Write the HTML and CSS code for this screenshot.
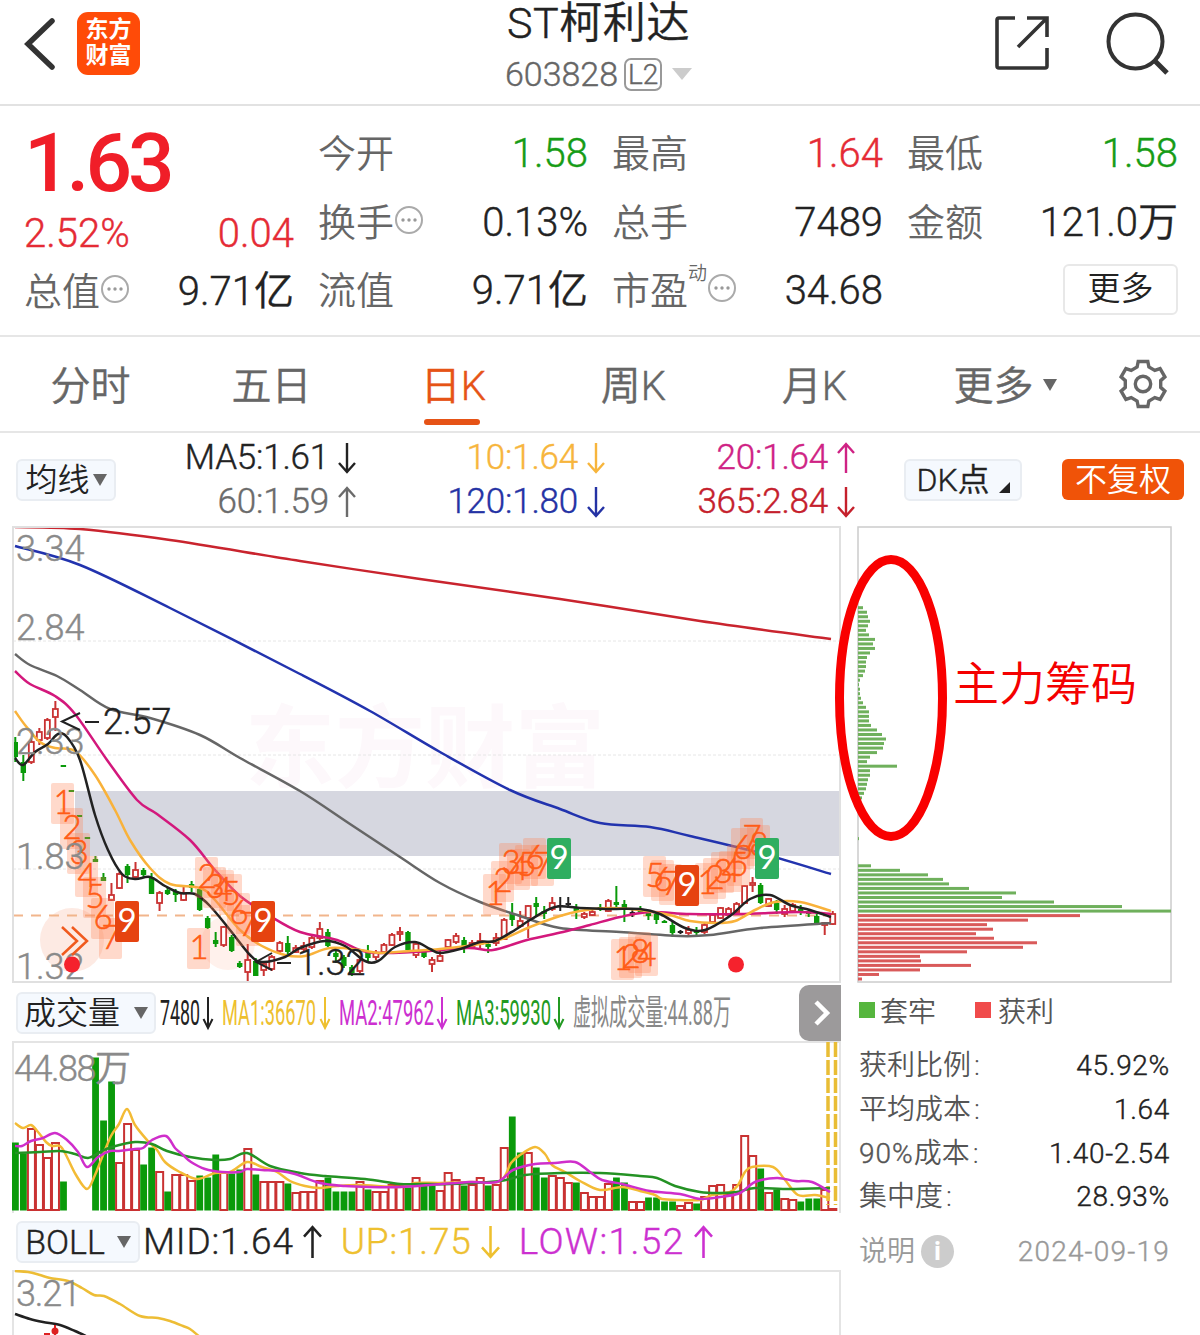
FILE: index.html
```html
<!DOCTYPE html>
<html lang="zh-CN">
<head>
    <meta charset="utf-8">
    <title>ST柯利达 603828</title>
    <link rel="stylesheet" href="styles.css">
</head>
<body>
    <svg class="defs" width="0" height="0">
        <symbol id="down" viewBox="0 0 18 32"><path d="M9 1V30M1 21L9 30L17 21" fill="none" stroke="currentColor" stroke-width="2.4"/></symbol>
        <symbol id="up" viewBox="0 0 18 32"><path d="M9 31V2M1 11L9 2L17 11" fill="none" stroke="currentColor" stroke-width="2.4"/></symbol>
        <symbol id="dots" viewBox="0 0 30 30"><circle cx="15" cy="15" r="13" fill="none" stroke="#aaa" stroke-width="2"/><g fill="#999"><circle cx="9" cy="15" r="1.7"/><circle cx="15" cy="15" r="1.7"/><circle cx="21" cy="15" r="1.7"/></g></symbol>
    </svg>

    <header>
        <div class="header-left">
            <svg class="back" width="32" height="52" viewBox="0 0 32 52"><path d="M28 3L4 26L28 49" fill="none" stroke="#333" stroke-width="5.5" stroke-linecap="round"/></svg>
            <div class="logo">东方<br>财富</div>
        </div>
        <div class="header-title">
            <h1>ST柯利达</h1>
            <div class="code">603828<span class="level">L2</span><i class="tri code-tri"></i></div>
        </div>
        <div class="header-right">
            <svg width="56" height="56" viewBox="0 0 56 56"><path d="M21 3H5Q3 3 3 5V51Q3 53 5 53H51Q53 53 53 51V33M53 22V3H33M53 3L24 32" fill="none" stroke="#333" stroke-width="3.6"/></svg>
            <svg width="64" height="64" viewBox="0 0 64 64"><circle cx="29.500" cy="29.500" r="27" fill="none" stroke="#333" stroke-width="4"/><path d="M49 49L61 61" stroke="#333" stroke-width="5"/></svg>
        </div>
    </header>

    <section class="quote">
        <div class="quote-col">
            <div class="price">1.63</div>
            <div class="quote-row change red"><span>2.52%</span><span>0.04</span></div>
            <div class="quote-row last"><label>总值<svg><use href="#dots"/></svg></label><span>9.71亿</span></div>
        </div>
        <div class="quote-col">
            <div class="quote-row"><label>今开</label><span class="green">1.58</span></div>
            <div class="quote-row"><label>换手<svg><use href="#dots"/></svg></label><span>0.13%</span></div>
            <div class="quote-row"><label>流值</label><span>9.71亿</span></div>
        </div>
        <div class="quote-col">
            <div class="quote-row"><label>最高</label><span class="red">1.64</span></div>
            <div class="quote-row"><label>总手</label><span>7489</span></div>
            <div class="quote-row"><label>市盈<sup>动</sup><svg><use href="#dots"/></svg></label><span>34.68</span></div>
        </div>
        <div class="quote-col">
            <div class="quote-row"><label>最低</label><span class="green">1.58</span></div>
            <div class="quote-row"><label>金额</label><span>121.0万</span></div>
            <div class="quote-row more-row"><button class="more">更多</button></div>
        </div>
    </section>

    <nav>
        <a>分时</a>
        <a>五日</a>
        <a class="active">日K</a>
        <a>周K</a>
        <a>月K</a>
        <a class="nav-more">更多<i class="tri nav-tri"></i></a>
        <svg width="50" height="50" viewBox="-25 -25 50 50"><path d="M-5.900-17L-4.800-22.500H4.800L5.900-17L11.800-13.600L17.100-15.400L21.900-7.100L17.700-3.400V3.400L21.900 7.100L17.100 15.400L11.800 13.600L5.900 17L4.800 22.500H-4.800L-5.900 17L-11.800 13.600L-17.100 15.400L-21.900 7.100L-17.700 3.400V-3.400L-21.900-7.100L-17.100-15.400L-11.800-13.600Z" fill="none" stroke="#666" stroke-width="3.400"/><circle r="7.700" fill="none" stroke="#666" stroke-width="3.400"/></svg>
    </nav>

    <section class="ma-bar">
        <button class="pick">均线<i class="tri"></i></button>
        <div class="ma-grid">
            <span class="black">MA5:1.61<svg><use href="#down"/></svg></span>
            <span class="yellow">10:1.64<svg><use href="#down"/></svg></span>
            <span class="pink">20:1.64<svg><use href="#up"/></svg></span>
            <span class="gray">60:1.59<svg><use href="#up"/></svg></span>
            <span class="blue">120:1.80<svg><use href="#down"/></svg></span>
            <span class="crimson">365:2.84<svg><use href="#down"/></svg></span>
        </div>
        <button class="pick dk">DK点<i class="corner"></i></button>
        <button class="adjust">不复权</button>
    </section>

    <main>
        <div class="charts">
            <svg id="kline" width="829" height="458" viewBox="12 526 829 458"></svg>

            <div class="sub-bar">
                <button class="pick vol-pick">成交量<i class="tri"></i></button>
                <svg class="ticker" width="640" height="56" viewBox="156 984 640 56">
                    <text x="160" y="1024" textLength="40" lengthAdjust="spacingAndGlyphs" fill="#222">7480</text>
                    <text x="222" y="1024" textLength="94" lengthAdjust="spacingAndGlyphs" fill="#eec02f">MA1:36670</text>
                    <text x="339" y="1024" textLength="95" lengthAdjust="spacingAndGlyphs" fill="#cc30d0">MA2:47962</text>
                    <text x="456" y="1024" textLength="95" lengthAdjust="spacingAndGlyphs" fill="#229a22">MA3:59930</text>
                    <text x="573" y="1024" textLength="158" lengthAdjust="spacingAndGlyphs" fill="#888">虚拟成交量:44.88万</text>
                    <g fill="none" stroke-width="2">
                        <path d="M208 996V1027M203.500 1018L208 1027L212.500 1018" stroke="#222"/>
                        <path d="M325 996V1027M320.500 1018L325 1027L329.500 1018" stroke="#eec02f"/>
                        <path d="M442 996V1027M437.500 1018L442 1027L446.500 1018" stroke="#cc30d0"/>
                        <path d="M559 996V1027M554.500 1018L559 1027L563.500 1018" stroke="#229a22"/>
                    </g>
                </svg>
                <button class="expand"><svg width="18" height="28" viewBox="0 0 18 28"><path d="M3 3L14 14L3 25" fill="none" stroke="#fff" stroke-width="4.500"/></svg></button>
            </div>

            <svg id="volume" width="829" height="172" viewBox="12 1041 829 172"></svg>

            <div class="sub-bar boll-bar">
                <button class="pick boll-pick">BOLL<i class="tri"></i></button>
                <span class="boll black">MID:1.64<svg><use href="#up"/></svg></span>
                <span class="boll gold">UP:1.75<svg><use href="#down"/></svg></span>
                <span class="boll violet">LOW:1.52<svg><use href="#up"/></svg></span>
            </div>

            <svg id="boll" width="829" height="65" viewBox="12 1270 829 65"></svg>
        </div>

        <aside>
            <svg id="chips" width="315" height="458" viewBox="857 526 315 458"></svg>
            <div class="legend"><i class="key-green"></i>套牢<i class="key-red"></i>获利</div>
            <dl>
                <div><dt>获利比例<em>:</em></dt><dd>45.92%</dd></div>
                <div><dt>平均成本<em>:</em></dt><dd>1.64</dd></div>
                <div><dt><span class="pct">90%</span>成本<em>:</em></dt><dd>1.40-2.54</dd></div>
                <div><dt>集中度<em>:</em></dt><dd>28.93%</dd></div>
            </dl>
            <div class="note"><span>说明<b class="info">i</b></span><span class="date">2024-09-19</span></div>
        </aside>
    </main>

    <script src="chart.js"></script>
</body>
</html>
```

FILE: styles.css
```css
* {
    box-sizing: border-box;
}

body {
    margin: 0;
    width: 1200px;
    height: 1335px;
    overflow: hidden;
    background: #fff;
    color: #222;
    font-family: Roboto, "Noto Sans CJK SC", sans-serif;
    font-weight: 350;
}

svg {
    display: block;
    flex: none;
}

.defs {
    position: absolute;
}

button {
    font-family: inherit;
    font-weight: inherit;
    padding: 0;
    border: none;
    color: #222;
}

.red { color: #e52b35; }
.green { color: #169c16; }
.black { color: #222; }
.yellow { color: #f7b53c; }
.pink { color: #cf2284; }
.gray { color: #6b6b6b; }
.blue { color: #2432a4; }
.crimson { color: #c5202c; }
.gold { color: #eec02f; }
.violet { color: #cc30d0; }

/* light digits are a little too thin on their own */
.code,
.quote-row > span,
.ma-grid,
.boll,
.boll-pick,
.dk,
nav,
dd,
.pct,
.date {
    -webkit-text-stroke: 0.4px currentColor;
}

.tri {
    display: inline-block;
    border: 7px solid transparent;
    border-top: 12px solid #666;
    border-bottom: 0;
}

/* header */
header {
    display: grid;
    grid-template-columns: 1fr auto 1fr;
    height: 106px;
    border-bottom: 2px solid #e2e2e2;
    padding: 0 30px 0 24px;
}

.header-left {
    display: flex;
    padding-top: 12px;
}

.back {
    margin-top: 6px;
}

.logo {
    width: 63px;
    height: 63px;
    margin-left: 21px;
    padding-top: 5px;
    border-radius: 11px;
    background: #ff4b08;
    color: #fff;
    font-size: 23px;
    font-weight: bold;
    line-height: 26px;
    text-align: center;
}

.header-title {
    padding-left: 3px;
    text-align: center;
}

.header-title h1 {
    margin: 0;
    font-size: 43px;
    font-weight: inherit;
    line-height: 46px;
    letter-spacing: 0.6px;
    -webkit-text-stroke: 0.4px currentColor;
}

.code {
    display: flex;
    align-items: center;
    justify-content: center;
    height: 56px;
    font-size: 34px;
    color: #666;
}

.level {
    width: 38px;
    height: 33px;
    margin-left: 6px;
    border: 2px solid #999;
    border-radius: 7px;
    font-size: 28px;
    line-height: 30px;
}

.code-tri {
    border-width: 12px 10px 0;
    border-top-color: #ccc;
    margin-left: 10px;
}

.header-right {
    display: flex;
    justify-content: flex-end;
    gap: 56px;
    padding-top: 12px;
}

.header-right svg:first-child {
    margin-top: 3px;
}

/* quote */
.quote {
    display: grid;
    grid-template-columns: 270px 270px 271px 271px;
    gap: 24px;
    height: 231px;
    padding: 14px 22px 0 24px;
    border-bottom: 2px solid #e6e6e6;
}

.quote-row {
    display: flex;
    justify-content: space-between;
    align-items: center;
    height: 68.5px;
    font-size: 40px;
    line-height: 68px;
    white-space: nowrap;
}

.quote-row label {
    display: flex;
    align-items: center;
    color: #666;
    font-size: 38px;
}

.quote-row label svg {
    width: 30px;
    height: 30px;
    margin-top: -6px;
}

.quote-row sup {
    align-self: flex-start;
    font-size: 19px;
    line-height: 34px;
}

.price {
    height: 89px;
    color: #f01e28;
    font-size: 82px;
    font-weight: 500;
    line-height: 87px;
    letter-spacing: -4px;
}

.change {
    height: 50px;
    margin-bottom: -1px;
    line-height: 50px;
}

.more-row {
    justify-content: flex-end;
}

.more {
    width: 115px;
    height: 51px;
    margin-bottom: 4px;
    border: 2px solid #e8e8e8;
    border-radius: 6px;
    background: #fff;
    font-size: 33px;
    line-height: 46px;
}

/* tabs */
nav {
    display: flex;
    align-items: center;
    height: 96px;
    border-bottom: 2px solid #e6e6e6;
    color: #666;
    font-size: 40px;
}

nav a {
    position: relative;
    width: 181px;
    height: 94px;
    line-height: 100px;
    text-align: center;
}

nav .active {
    color: #e65316;
    padding-left: 2px;
}

nav .active::after {
    content: "";
    position: absolute;
    left: 62px;
    bottom: 6px;
    width: 56px;
    height: 6px;
    border-radius: 3px;
    background: #e65316;
}

nav .nav-more {
    width: 200px;
}

.nav-tri {
    margin: 0 0 9px 9px;
}

nav svg {
    margin-left: 13px;
}

/* moving averages */
.ma-bar {
    display: flex;
    align-items: center;
    height: 93px;
    padding: 0 16px;
}

.pick {
    display: flex;
    align-items: center;
    justify-content: center;
    width: 100px;
    height: 42px;
    border: 2px solid #e9edf2;
    border-radius: 6px;
    background: #f5f9fe;
    font-size: 32px;
    line-height: 38px;
}

.pick .tri {
    margin-left: 3px;
}

.ma-grid {
    display: grid;
    grid-template-columns: 241px 249px 250px;
    grid-template-rows: 44px 44px;
    font-size: 35px;
    letter-spacing: -0.2px;
}

.ma-grid span {
    display: flex;
    align-items: center;
    justify-content: flex-end;
}

.ma-grid svg {
    width: 20px;
    height: 32px;
    margin-left: 8px;
}

.dk {
    width: 118px;
    margin-left: 48px;
}

.corner {
    align-self: flex-end;
    margin: 0 0 6px 9px;
    border-left: 11px solid transparent;
    border-bottom: 11px solid #222;
}

.adjust {
    width: 122px;
    height: 41px;
    margin-left: 40px;
    border-radius: 6px;
    background: #f05308;
    color: #fff;
    font-size: 32px;
    line-height: 38px;
}

/* charts */
main {
    display: grid;
    grid-template-columns: 829px 315px;
    column-gap: 16px;
    padding-left: 12px;
}

main text {
    font-family: Roboto, "Noto Sans CJK SC", sans-serif;
}

.sub-bar {
    display: flex;
    align-items: center;
    height: 57px;
    padding-left: 4px;
}

.sub-bar .tri {
    margin-left: 14px;
}

.vol-pick {
    width: 140px;
}

.ticker {
    overflow: visible;
    font-size: 35px;
    font-weight: 400;
}

.expand {
    width: 42px;
    height: 56px;
    margin-left: 3px;
    padding-left: 14px;
    border-radius: 10px 0 0 10px;
    background: #9c9a9b;
}

.boll-pick {
    width: 124px;
    font-size: 34px;
}

.boll-bar .tri {
    margin-left: 12px;
}

.boll {
    display: flex;
    align-items: center;
    margin-left: 3px;
    font-size: 37px;
    letter-spacing: 0.8px;
}

.boll svg {
    width: 21px;
    height: 34px;
    margin-left: 8px;
}

.boll + .boll {
    margin-left: 18px;
}

.boll.violet {
    letter-spacing: 1.4px;
}

#kline,
#volume,
#boll {
    overflow: hidden;
}

#chips {
    overflow: visible;
}

.axis,
.axis-volume {
    font-size: 36px;
    fill: #8a8a8a;
    stroke: #8a8a8a;
    stroke-width: 0.4px;
}

.axis-volume {
    letter-spacing: -1.5px;
}

.extreme {
    font-size: 36px;
    fill: #222;
    stroke: #222;
    stroke-width: 0.4px;
}

.watermark {
    font-size: 90px;
    font-weight: bold;
    fill: #fdf8fb;
}

main .td {
    font-family: Lato, sans-serif;
    font-size: 33px;
    font-weight: 300;
    text-anchor: middle;
    fill: #ff5c17;
    stroke: #ff5c17;
    stroke-width: 0.6px;
}

main .td-nine {
    font-weight: 400;
    fill: #fff;
    stroke: none;
}

.callout {
    font-size: 46px;
    fill: #f40000;
}

/* chip statistics */
aside {
    color: #555;
    font-size: 28px;
}

.legend {
    display: flex;
    align-items: center;
    height: 51px;
    padding-left: 2px;
}

.legend i {
    width: 16px;
    height: 16px;
    margin-right: 5px;
}

.key-green {
    background: #56b63e;
}

.legend .key-red {
    margin-left: 39px;
    margin-right: 7px;
    background: #f04b4b;
}

dl {
    margin: 9px 0 0;
}

dl div,
.note {
    display: flex;
    justify-content: space-between;
    align-items: center;
    height: 43.7px;
    padding: 0 2px;
    line-height: 43px;
}

dt,
dd {
    margin: 0;
}

dt em {
    margin-left: 3px;
    font-style: normal;
}

.pct {
    letter-spacing: 1px;
}

dd {
    color: #222;
    letter-spacing: 0.7px;
}

.note {
    margin-top: 11px;
    color: #999;
}

.note span {
    display: flex;
    align-items: center;
}

.date {
    letter-spacing: 1.2px;
}

.info {
    width: 33px;
    height: 33px;
    margin-left: 6px;
    border-radius: 50%;
    background: #ccc;
    color: #fff;
    font-size: 26px;
    line-height: 32px;
    text-align: center;
}
```

FILE: chart.js
```js
var GREEN = "#0a9a0a";
var RED = "#c93232";
var X0 = 15.3;
var STEP = 8.014;

// color, high, body top, body bottom, low
var candles = [
    ["g",737,742,757,762],["g",755,762,773,781],["r",738,742,762,764],["r",728,732,740,745],["r",718,720,738,740],
    ["r",701,709,717,731],["g",765,765,767,767],["g",790,790,792,792],["g",815,815,817,817],["g",837,837,839,839],
    ["g",856,859,862,862],["g",873,877,881,881],["r",883,895,900,901],["r",872,874,888,889],["g",864,866,875,883],
    ["r",862,870,877,879],["g",868,870,875,877],["g",873,877,894,894],["r",891,893,903,911],["g",888,890,894,895],
    ["g",889,891,895,902],["r",885,893,900,901],["g",881,884,888,892],["g",888,889,910,911],["g",916,918,928,929],
    ["g",932,940,944,947],["r",926,927,945,947],["g",935,937,951,952],["g",961,963,967,968],["r",944,960,972,983],
    ["g",958,961,976,976],["r",962,964,970,976],["r",955,957,969,971],["r",941,943,951,953],["g",936,943,952,955],
    ["r",945,948,952,953],["r",942,946,949,952],["r",935,938,947,949],["r",922,929,938,940],["g",929,932,946,947],
    ["g",951,953,957,963],["g",955,957,966,968],["g",965,967,973,976],["r",958,960,971,973],["g",945,952,958,961],
    ["r",950,953,957,960],["r",943,945,952,953],["r",933,935,945,946],["r",927,932,934,941],["g",931,932,950,950],
    ["r",941,944,955,958],["g",949,951,957,958],["r",957,960,964,972],["r",951,956,961,962],["r",939,940,947,948],
    ["r",933,936,942,944],["g",937,940,947,953],["r",940,943,946,947],["r",933,941,944,948],["g",942,944,947,953],
    ["r",933,938,943,946],["r",918,920,939,940],["g",903,914,920,926],["r",911,921,926,928],["r",905,906,918,938],
    ["g",897,903,907,916],["g",906,911,914,919],["r",897,903,909,911],["k",897,905,907,911],["k",897,903,905,908],
    ["g",904,907,911,919],["r",912,914,917,919],["r",909,912,915,916],["g",904,907,910,911],["r",899,901,911,912],
    ["g",886,902,905,907],["g",900,904,910,922],["k",909,912,914,917],["g",906,909,912,914],["g",911,913,916,920],
    ["g",913,914,920,924],["g",920,921,923,923],["g",921,925,933,937],["k",930,931,933,934],["r",926,930,933,936],
    ["g",927,930,933,935],["r",923,925,932,934],["r",914,915,922,923],["r",907,908,918,919],["r",907,909,915,917],
    ["r",902,904,912,914],["r",885,886,903,904],["r",877,883,885,892],["g",883,885,903,904],["r",898,899,906,907],
    ["g",900,903,910,914],["r",905,909,914,917],["r",903,905,911,913],["g",905,909,912,915],["g",909,911,914,917],
    ["g",914,916,923,924],["r",922,923,925,935],["r",911,914,924,925]
];

// bar heights in px, same order as candles; sign gives the colour
var volumes = [
    -68,-57,82,66,53,68,-29,0,0,0,-153,-90,-129,48,87,61,-46,-63,39,-19,36,36,30,-35,-33,-56,38,-37,-41,62,-36,29,29,29,
    -27,18,19,19,30,-33,-19,-19,-19,29,-21,19,19,26,26,-23,33,-25,-25,20,38,31,-25,26,33,-25,26,63,-94,-58,58,-43,-33,
    35,33,28,-28,18,14,14,27,-33,-28,9,9,-13,-13,-9,-9,5,8,-7,14,25,26,17,26,75,55,-42,18,-21,12,11,-9,-12,-12,21,2
];

var maLines = [
    ["#c9242e", [15,527,80,529,170,540,300,561,420,579,560,599,700,621,831,639]],
    ["#2233ae", [15,546,80,565,170,608,300,674,370,711,440,752,510,790,560,809,600,823,650,827,690,836,760,853,831,874]],
    ["#666", [15,654,30,665,57,676,80,690,110,709,150,718,200,735,240,758,300,791,350,824,400,857,440,883,480,902,520,916,560,928,620,932,680,936,710,935,760,928,831,923]],
    ["#d3187c", [15,671,30,684,55,696,75,714,107,760,137,800,157,814,190,840,215,870,240,896,270,916,300,932,337,940,367,952,413,952,467,948,493,950,527,940,563,932,590,925,620,917,650,912,690,914,740,914,800,912,831,914]],
    ["#f9b23a", [15,711,25,725,40,742,55,748,75,751,95,775,115,810,130,840,150,868,170,884,200,888,215,900,240,930,262,946,285,955,305,956,330,948,360,950,380,953,410,951,440,949,480,944,505,938,530,927,560,916,580,911,610,908,640,910,670,915,690,921,715,923,735,921,755,910,775,902,800,902,831,911]],
    ["#222", [15,758,23,765,35,752,48,744,58,734,67,737,80,760,95,815,108,850,122,874,135,879,150,877,165,886,180,893,195,894,210,906,230,930,250,955,262,962,285,957,300,948,325,941,345,946,365,961,378,961,395,947,415,942,430,949,440,953,460,949,480,942,495,941,515,930,530,920,555,907,580,908,610,909,640,909,660,914,685,928,705,930,730,916,750,899,770,895,790,905,810,910,831,917]]
];

var volLines = [
    ["#f3bb35", [15,1123,23,1128,31,1125,38,1132,46,1142,52,1146,60,1146,66,1155,76,1175,87,1189,95,1175,103,1155,111,1136,119,1124,127,1109,135,1125,147,1140,157,1150,165,1162,178,1171,197,1179,215,1173,230,1172,247,1162,262,1167,277,1172,290,1181,305,1186,320,1188,337,1186,360,1185,400,1187,415,1183,440,1183,470,1182,500,1181,511,1163,520,1155,535,1147,545,1154,552,1165,565,1172,580,1181,600,1190,622,1187,640,1191,655,1195,662,1199,680,1200,700,1200,712,1195,730,1192,738,1185,745,1172,752,1167,773,1167,785,1180,798,1195,815,1195,830,1198]],
    ["#249224", [15,1153,40,1152,60,1151,75,1154,88,1158,100,1152,112,1147,135,1142,152,1144,167,1151,190,1157,215,1160,230,1159,247,1153,270,1166,300,1173,325,1176,365,1179,400,1184,420,1184,450,1184,500,1181,525,1175,560,1173,600,1173,640,1176,657,1178,675,1186,700,1192,720,1193,737,1192,755,1188,790,1189,830,1188]],
    ["#cf2ecb", [15,1146,22,1146,31,1141,43,1138,55,1133,67,1140,78,1152,87,1167,98,1157,110,1151,119,1151,135,1149,143,1148,152,1140,166,1136,175,1148,183,1155,191,1162,205,1169,222,1172,240,1172,247,1169,262,1170,280,1171,295,1174,320,1183,345,1186,370,1187,400,1187,430,1185,470,1182,497,1182,513,1170,535,1164,555,1163,575,1162,590,1172,602,1180,622,1184,650,1191,680,1194,700,1199,720,1197,740,1193,755,1182,777,1178,795,1181,812,1182,830,1192]]
];

var bollLines = [
    ["#edbd35", [15,1271,28,1272,40,1275,50,1278,68,1281,82,1288,94,1295,104,1296,120,1304,140,1316,158,1318,170,1321,183,1326,190,1329,200,1337]],
    ["#222", [15,1314,30,1319,43,1322,60,1325,75,1331,88,1337]]
];

// sequential counts: number, left, top of the tile
var counts = [
    [1,51,783],[2,60,808],[3,67,833],[4,75,856],[5,83,877],[6,91,898],[7,99,918],
    [1,187,928],[2,195,857],[3,203,867],[4,211,870],[5,219,874],[6,227,893],[7,236,905],
    [1,483,874],[2,491,861],[3,499,843],[4,507,849],[5,515,845],[6,523,838],[7,531,845],
    [5,643,856],[6,651,860],[7,659,864],
    [1,695,863],[2,703,858],[3,711,852],[4,719,851],[5,727,845],[6,731,828],[7,740,818],[8,747,825],
    [1,611,939],[2,619,937],[8,628,932],[4,635,935]
];
var nines = [[115,901,"#e64310"],[251,901,"#e64310"],[675,865,"#e64310"],[547,838,"#2fae60"],[755,838,"#2fae60"]];

// distribution widths from the top price down, rows 4.53px apart
var chips = [5,9,10,12,10,8,11,17,15,17,12,9,8,8,7,5,2,1,2,2,3,5,8,11,11,11,13,19,24,28,26,25,19,12,9,39,12,12,10,9,8,6,4,
    0,0,0,0,0,0,0,0,1,0,0,0,0,0,13,42,70,85,91,111,158,144,196,264,313,
    222,170,129,135,118,136,179,165,109,62,63,113,62,21,4];

function line(x1, y1, x2, y2, color, width, dash) {
    return '<line x1="' + x1 + '" y1="' + y1 + '" x2="' + x2 + '" y2="' + y2 + '" stroke="' + color + '" stroke-width="' + width + '"' +
        (dash ? ' stroke-dasharray="' + dash + '"' : '') + '/>';
}

function rect(x, y, w, h, attrs) {
    return '<rect x="' + x + '" y="' + y + '" width="' + w + '" height="' + h + '" ' + attrs + '/>';
}

function text(x, y, cls, str) {
    return '<text x="' + x + '" y="' + y + '" class="' + cls + '">' + str + '</text>';
}

function curve(item) {
    var p = item[1], n = p.length / 2;
    var d = "M" + p[0] + " " + p[1];
    for (var i = 0; i < n - 1; i++) {
        var a = Math.max(i - 1, 0), b = Math.min(i + 2, n - 1);
        d += "C" + (p[2*i] + (p[2*i+2] - p[2*a]) / 6) + " " + (p[2*i+1] + (p[2*i+3] - p[2*a+1]) / 6) + " " +
            (p[2*i+2] - (p[2*b] - p[2*i]) / 6) + " " + (p[2*i+3] - (p[2*b+1] - p[2*i+1]) / 6) + " " +
            p[2*i+2] + " " + p[2*i+3];
    }
    return '<path d="' + d + '" fill="none" stroke="' + item[0] + '" stroke-width="2.5"/>';
}

function drawKline() {
    var s = text(245, 780, "watermark", "东方财富");
    s += rect(75, 791, 765, 65, 'fill="#d6d7e0"');
    [641, 755, 869].forEach(function (y) {
        s += line(13, y, 840, y, "#e6e6e6", 1, "3 2");
    });
    s += '<circle cx="72" cy="940" r="32" fill="#fdeae3"/><circle cx="228" cy="943" r="27" fill="#fff1ec"/>';
    s += line(13, 915.5, 840, 915.5, "#f1b58c", 2, "10 8");

    candles.forEach(function (c, i) {
        var x = X0 + i * STEP;
        var color = c[0] == "g" ? GREEN : c[0] == "r" ? RED : "#222";
        if (c[0] == "r") {
            s += line(x, c[1], x, c[2], color, 2) + line(x, c[3], x, c[4], color, 2);
            s += rect(x - 2.5, c[2], 5, c[3] - c[2], 'fill="#fff" stroke="' + color + '" stroke-width="1.8"');
        } else {
            s += line(x, c[1], x, c[4], color, 2);
            s += rect(x - 2.7, c[2], 5.4, c[3] - c[2], 'fill="' + color + '"');
        }
    });
    s += maLines.map(curve).join("");

    counts.forEach(function (c) {
        s += rect(c[1], c[2], 23, 41, 'rx="2" fill="#ff8052" fill-opacity="0.3"');
    });
    counts.forEach(function (c) {
        s += text(c[1] + 12, c[2] + 31, "td", c[0]);
    });
    nines.forEach(function (c) {
        s += rect(c[0], c[1], 24, 41, 'rx="2" fill="' + c[2] + '"') + text(c[0] + 12, c[1] + 31, "td td-nine", 9);
    });

    s += text(16, 561, "axis", "3.34") + text(16, 640, "axis", "2.84") + text(16, 754, "axis", "2.33") +
        text(16, 869, "axis", "1.83") + text(16, 979, "axis", "1.32");
    s += '<path d="M80 713L62 721.500L80 730M85 722H99" fill="none" stroke="#222" stroke-width="2"/>' + text(103, 734, "extreme", "2.57");
    s += '<path d="M272 953L256 962L272 970M277 963H291" fill="none" stroke="#222" stroke-width="2"/>' + text(297, 975, "extreme", "1.32");
    s += '<path d="M62 927L77 941L62 955M72 927L87 941L72 955" fill="none" stroke="#f05a1e" stroke-width="2.500"/>';
    s += '<circle cx="72" cy="964.500" r="8" fill="#f5222d"/><circle cx="736" cy="964.500" r="8" fill="#f5222d"/>';
    s += rect(13, 527, 827, 455, 'fill="none" stroke="#e0e0e0" stroke-width="2"');
    document.getElementById("kline").innerHTML = s;
}

function drawVolume() {
    var s = rect(13, 1042, 827, 200, 'fill="none" stroke="#e4e4e4" stroke-width="2"');
    volumes.forEach(function (v, i) {
        var x = X0 + i * STEP;
        if (v < 0) {
            s += rect(x - 3.3, 1210.5 + v, 6.8, -v, 'fill="' + GREEN + '"');
        } else if (v > 0) {
            s += rect(x - 3.4, 1211 - v, 7, v - 1, 'fill="#fff" stroke="' + RED + '" stroke-width="2"');
        }
    });
    s += line(828, 1042, 828, 1205, "#e9bd35", 3.5, "15 3") + line(835.5, 1042, 835.5, 1205, "#e9bd35", 3.5, "15 3");
    s += volLines.map(curve).join("");
    s += text(14, 1081, "axis-volume", "44.88万");
    document.getElementById("volume").innerHTML = s;
}

function drawBoll() {
    var s = rect(13, 1271, 827, 100, 'fill="none" stroke="#e4e4e4" stroke-width="2"');
    s += bollLines.map(curve).join("");
    s += rect(44, 1333, 6, 6, 'fill="#d22"') + '<circle cx="55" cy="1331" r="3.500" fill="#d22"/>' + line(55, 1325, 55, 1336, "#d22", 2);
    s += '<text x="16" y="1306" class="axis" textLength="65">3.21</text>';
    document.getElementById("boll").innerHTML = s;
}

function drawChips() {
    var s = rect(858, 527, 313, 455, 'fill="none" stroke="#ccc" stroke-width="1.5"');
    chips.forEach(function (w, i) {
        s += rect(858, 606.2 + i * 4.528, w, 3, 'fill="' + (i < 68 ? "#6fb05c" : "#d95a5a") + '"');
    });
    s += '<ellipse cx="891" cy="698" rx="51.500" ry="138.500" fill="none" stroke="#f90000" stroke-width="9"/>';
    s += text(953, 700, "callout", "主力筹码");
    document.getElementById("chips").innerHTML = s;
}

drawKline();
drawVolume();
drawBoll();
drawChips();
```
